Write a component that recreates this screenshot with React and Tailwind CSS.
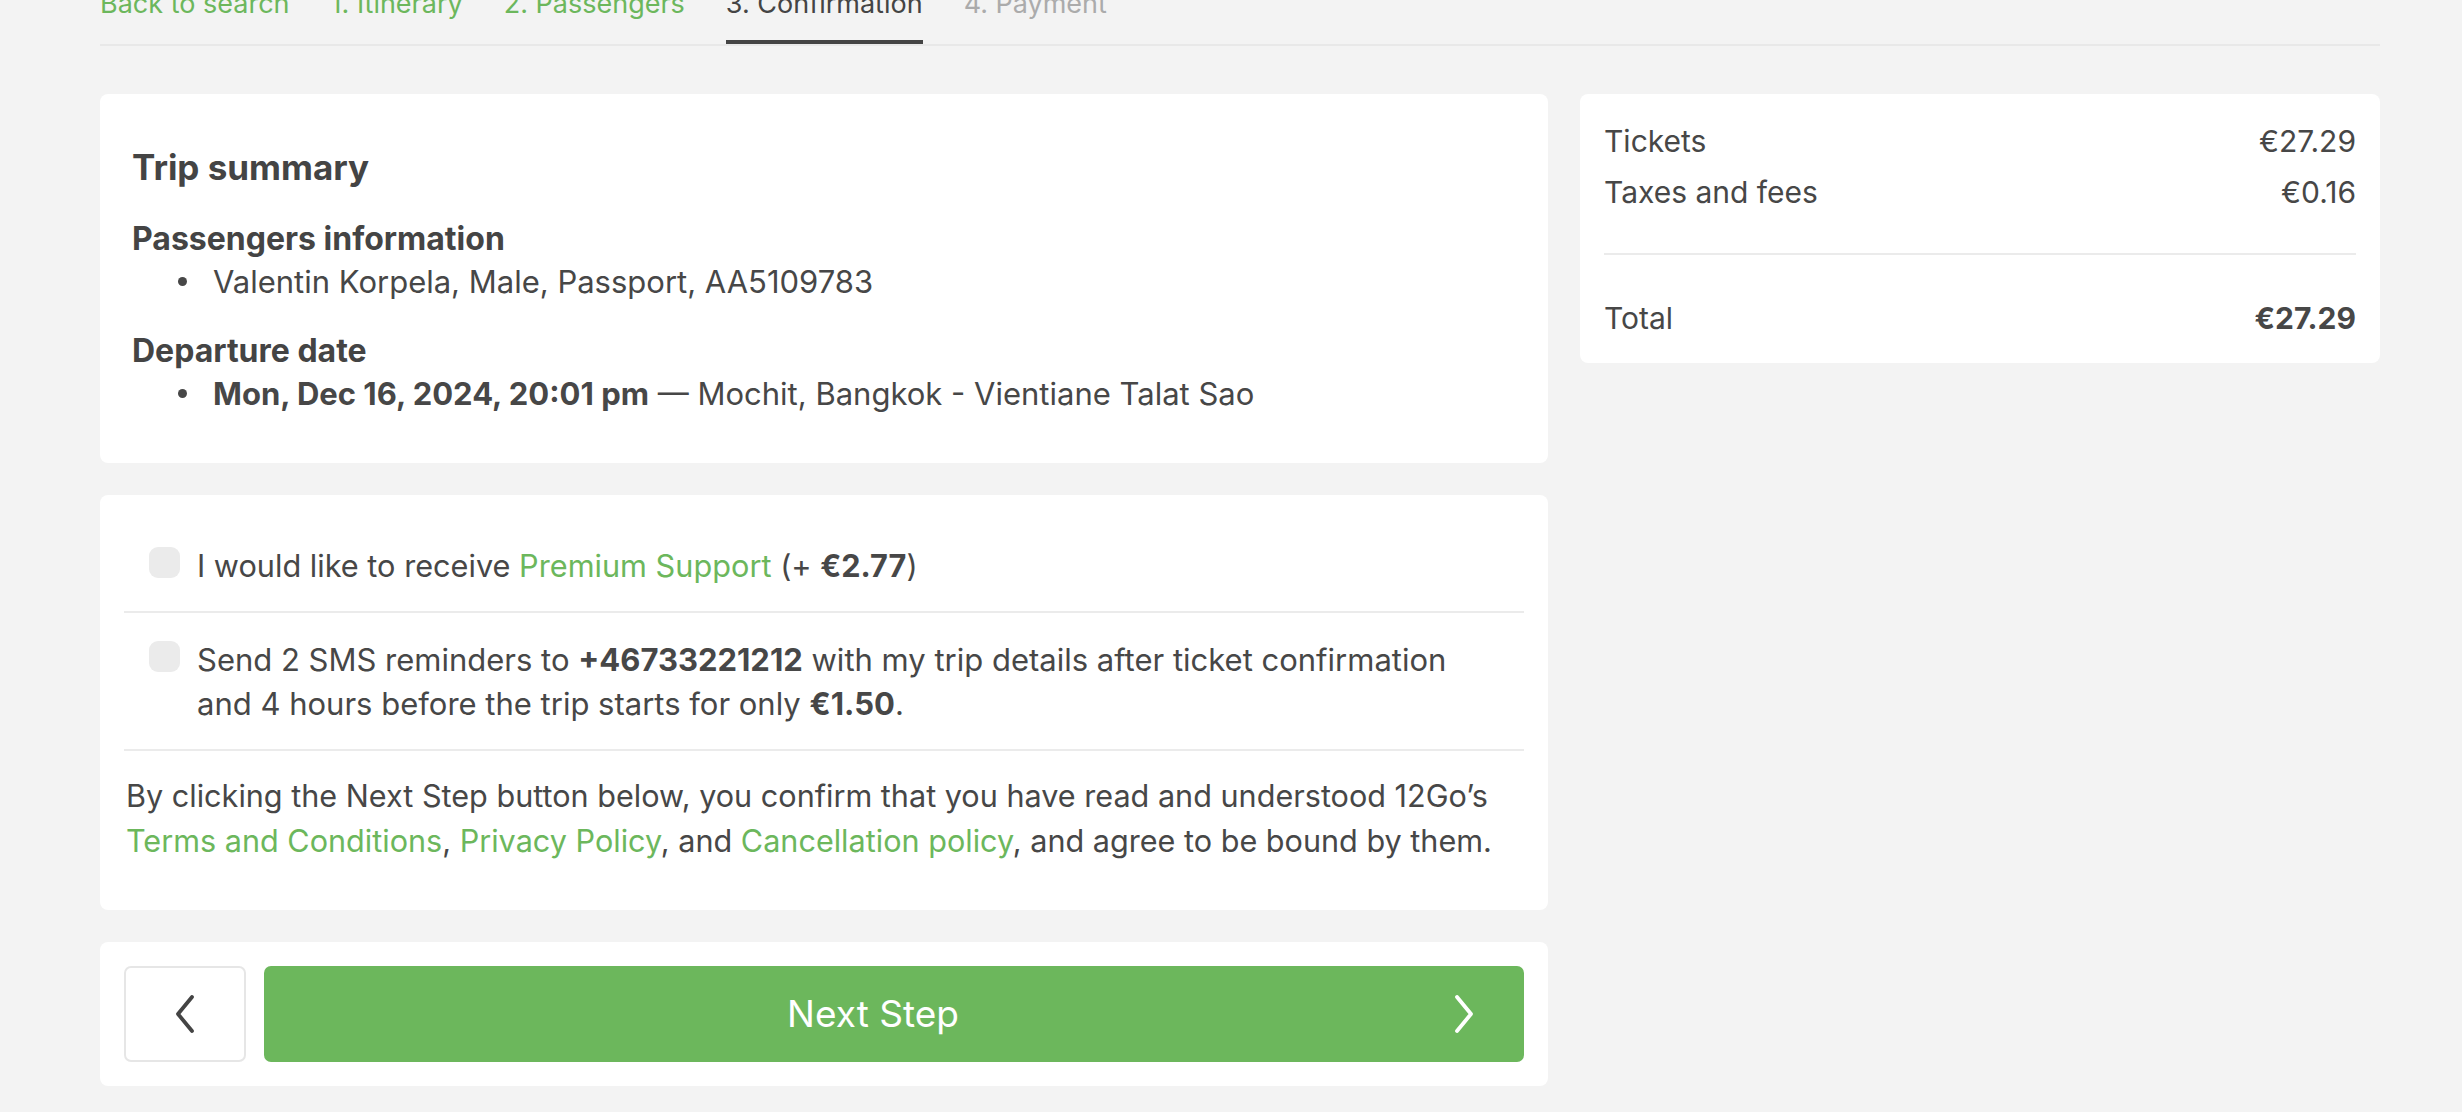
import React from 'react'

const tabs = [
  { label: 'Back to search', state: 'done' },
  { label: '1. Itinerary', state: 'done' },
  { label: '2. Passengers', state: 'done' },
  { label: '3. Confirmation', state: 'active' },
  { label: '4. Payment', state: 'todo' },
]

function Chevron({ dir = 'right', className = '' }) {
  const points = dir === 'right' ? '4,2 18,19 4,36' : '18,2 4,19 18,36'
  return (
    <svg width="22" height="38" viewBox="0 0 22 38" className={className}>
      <polyline points={points} fill="none" stroke="currentColor" strokeWidth="3.8" strokeLinecap="round" strokeLinejoin="round" />
    </svg>
  )
}

function Bullet({ children }) {
  return (
    <li className="flex items-center">
      <span className="w-[9px] h-[9px] rounded-full bg-[#474747] ml-[46px] mr-[26px] shrink-0" />
      <span>{children}</span>
    </li>
  )
}

function Checkbox() {
  return <span className="w-[31px] h-[31px] rounded-[9px] bg-[#ebebeb] shrink-0 mt-[3px]" />
}

export default function App() {
  return (
    <div className="min-h-screen bg-[#f3f3f3] text-[#474747] font-['Inter',sans-serif] overflow-hidden">
      {/* Steps */}
      <nav className="ml-[100px] w-[2280px] flex gap-[41px] border-b-2 border-[#e8e8e8] text-[27px] leading-[28px] -mt-[10px]">
        {tabs.map(t => (
          <span
            key={t.label}
            className={
              t.state === 'active'
                ? 'pb-[22px] border-b-4 border-[#444] text-[#444]'
                : t.state === 'done'
                ? 'pb-[22px] border-b-4 border-transparent text-[#6cb75c]'
                : 'pb-[22px] border-b-4 border-transparent text-[#ababab]'
            }
          >
            {t.label}
          </span>
        ))}
      </nav>

      <div className="ml-[100px] w-[2280px] mt-[48px] flex gap-[32px] items-start">
        {/* Left column */}
        <div className="w-[1448px] flex flex-col gap-[32px]">
          {/* Trip summary */}
          <section className="bg-white rounded-[8px] px-[32px] pt-[51px] pb-[48px]">
            <h2 className="text-[35px] leading-[44px] font-bold text-[#444]">Trip summary</h2>
            <h3 className="mt-[28px] text-[32px] leading-[43px] font-bold text-[#444]">Passengers information</h3>
            <ul className="text-[31px] leading-[43px]">
              <Bullet>Valentin Korpela, Male, Passport, AA5109783</Bullet>
            </ul>
            <h3 className="mt-[26px] text-[32px] leading-[43px] font-bold text-[#444]">Departure date</h3>
            <ul className="text-[31px] leading-[43px]">
              <Bullet>
                <b className="font-bold">Mon, Dec 16, 2024, 20:01 pm</b> — Mochit, Bangkok - Vientiane Talat Sao
              </Bullet>
            </ul>
          </section>

          {/* Options */}
          <section className="bg-white rounded-[8px] px-[24px] pt-[24px] pb-[47px] text-[31px] leading-[44px]">
            <label className="flex gap-[17px] pl-[25px] pt-[25px] pb-[23px] border-b-2 border-[#ebebeb] text-[30.7px]">
              <Checkbox />
              <span>
                I would like to receive <span className="text-[#6cb75c]">Premium Support</span> (+ <b className="font-bold">€2.77</b>)
              </span>
            </label>
            <label className="flex gap-[17px] pl-[25px] pt-[25px] pb-[23px] border-b-2 border-[#ebebeb]">
              <Checkbox />
              <span>
                Send 2 SMS reminders to <b className="font-bold">+46733221212</b> with my trip details after ticket confirmation
                <br />
                and 4 hours before the trip starts for only <b className="font-bold">€1.50</b>.
              </span>
            </label>
            <p className="mt-[22px] pl-[2px] leading-[45px] text-[30.6px]">
              By clicking the Next Step button below, you confirm that you have read and understood 12Go’s
              <br />
              <span className="text-[#6cb75c]">Terms and Conditions</span>, <span className="text-[#6cb75c]">Privacy Policy</span>, and{' '}
              <span className="text-[#6cb75c]">Cancellation policy</span>, and agree to be bound by them.
            </p>
          </section>

          {/* Actions */}
          <section className="bg-white rounded-[8px] p-[24px] flex gap-[18px]">
            <button className="w-[122px] h-[96px] rounded-[7px] border-2 border-[#e6e6e6] flex items-center justify-center text-[#444]">
              <Chevron dir="left" />
            </button>
            <button className="relative flex-1 h-[96px] rounded-[7px] bg-[#6cb75c] text-white text-[37px] flex items-center justify-center pr-[42px]">
              Next Step
              <Chevron className="absolute right-[49px]" />
            </button>
          </section>
        </div>

        {/* Price summary */}
        <aside className="flex-1 bg-white rounded-[8px] px-[24px] pt-[27px] pb-[25px] text-[30px] leading-[40px]">
          <div className="flex flex-col gap-[11px]">
            <div className="flex justify-between">
              <span>Tickets</span>
              <span>€27.29</span>
            </div>
            <div className="flex justify-between">
              <span>Taxes and fees</span>
              <span>€0.16</span>
            </div>
          </div>
          <div className="mt-[41px] border-t-2 border-[#ebebeb]" />
          <div className="mt-[43px] flex justify-between">
            <span>Total</span>
            <b className="font-bold">€27.29</b>
          </div>
        </aside>
      </div>
    </div>
  )
}
